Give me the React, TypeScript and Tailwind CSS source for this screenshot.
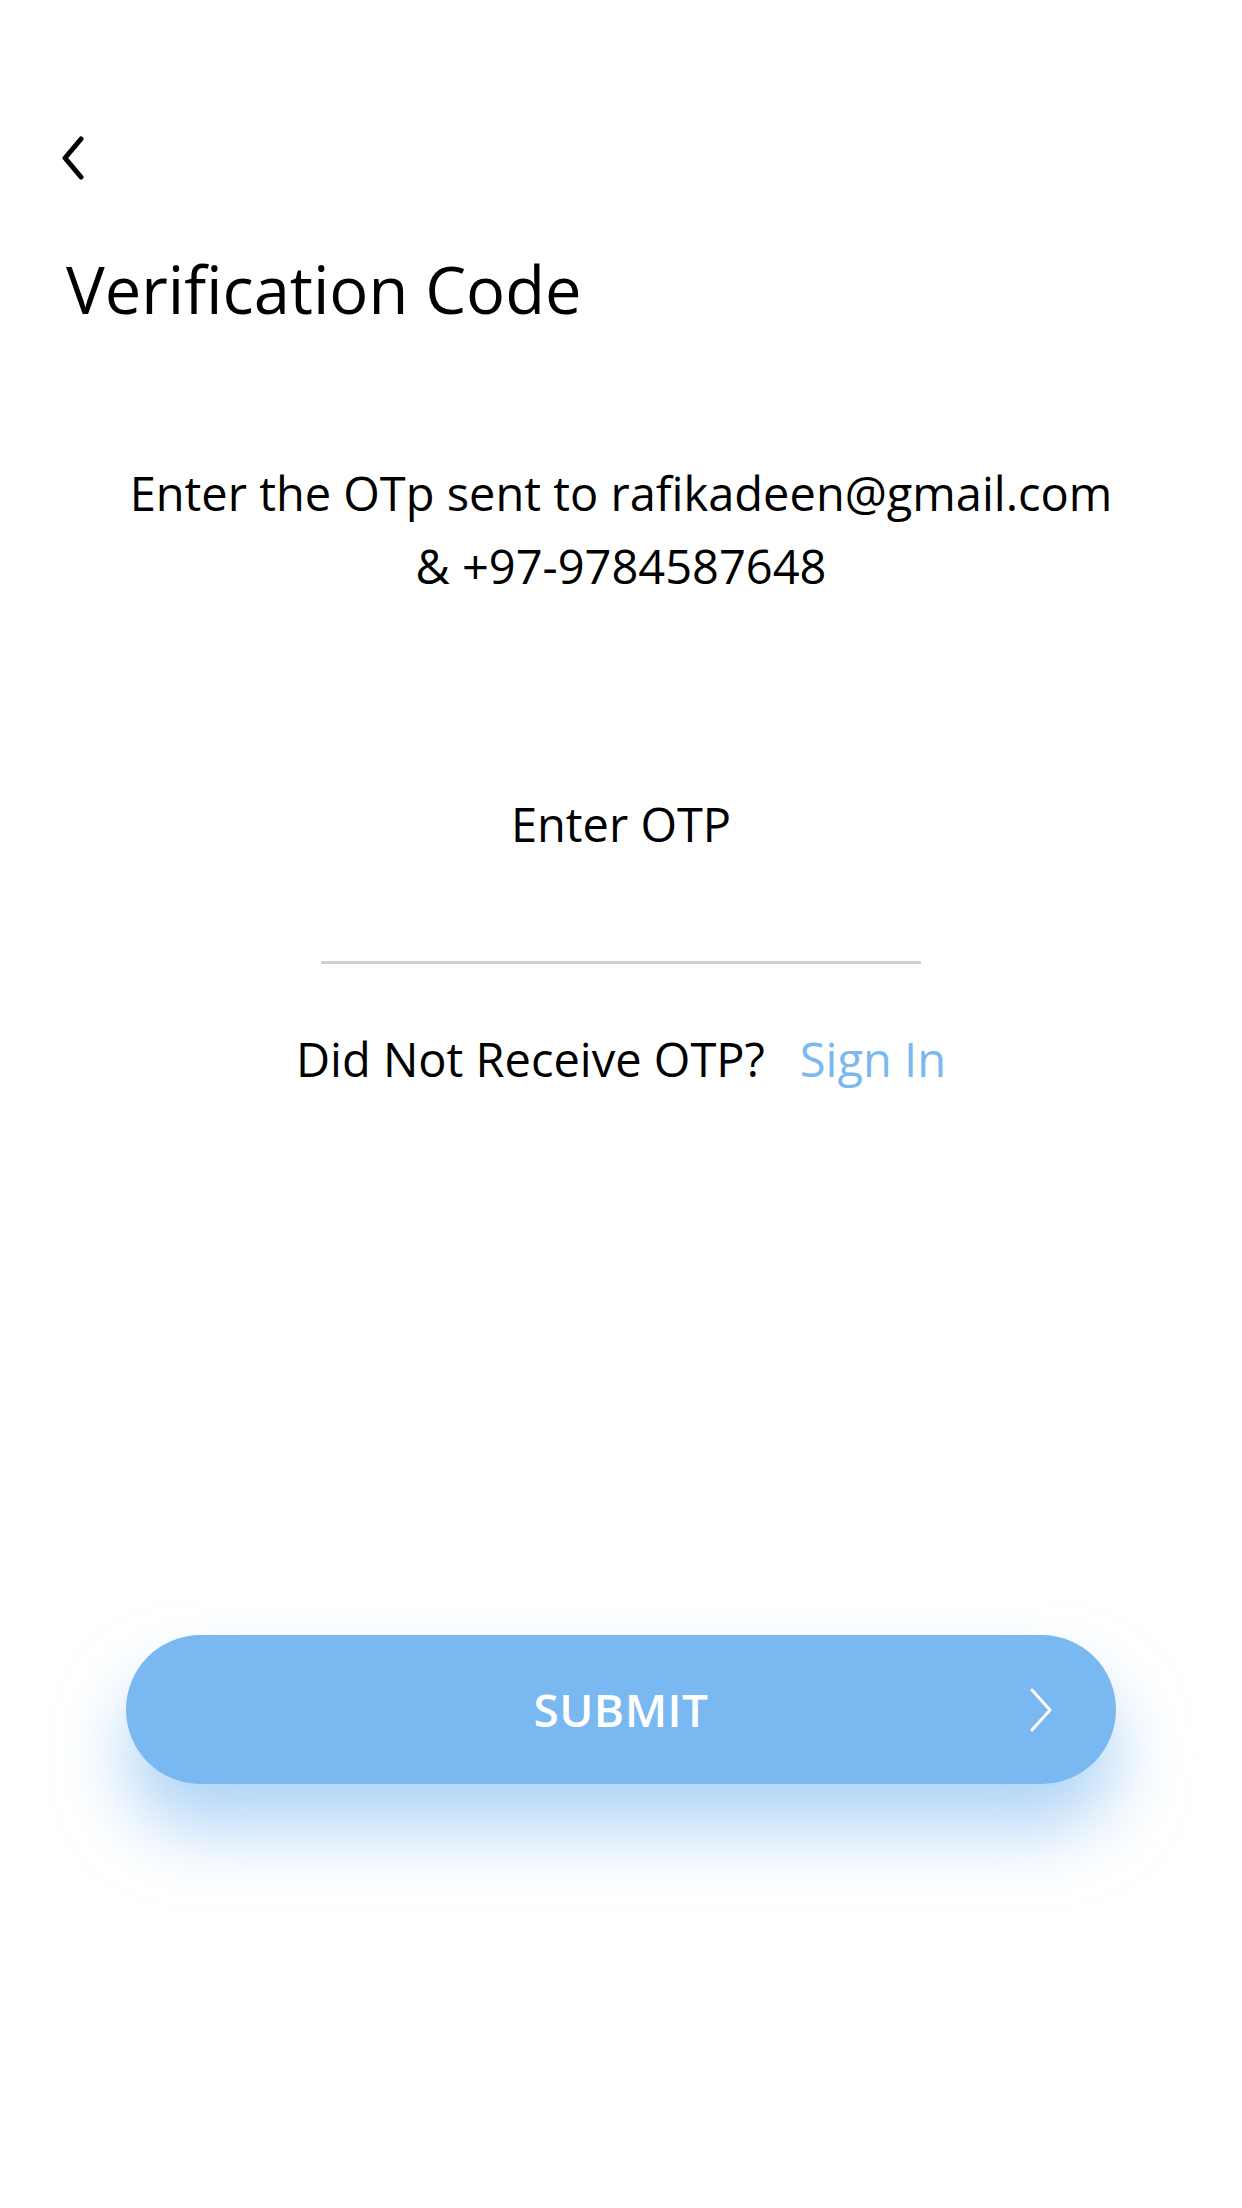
import React from 'react'

const BackIcon = () => (
  <svg width="26" height="44" viewBox="0 0 26 44" fill="none">
    <path d="M21 3 L5 22 L21 41" stroke="#000" strokeWidth="5" strokeLinecap="round" strokeLinejoin="round" />
  </svg>
)

const NextIcon = () => (
  <svg width="26" height="44" viewBox="0 0 26 44" fill="none">
    <path d="M4 2 L22 22 L4 42" stroke="#fff" strokeWidth="3" strokeLinecap="round" strokeLinejoin="round" />
  </svg>
)

export default function App() {
  return (
    <div className="min-h-[2208px] w-full bg-white font-['Open_Sans',sans-serif] text-black">
      <div className="pl-[60px] pt-[136px]">
        <button className="block">
          <BackIcon />
        </button>
      </div>

      <h1 className="ml-[66px] mt-[77px] text-[65px] leading-[65px] font-normal">
        Verification Code
      </h1>

      <p className="mt-[135px] text-center text-[47px] leading-[73px]">
        Enter the OTp sent to rafikadeen@gmail.com
        <br />
        &amp; +97-9784587648
      </p>

      <div className="mt-[185px] flex flex-col items-center">
        <label className="text-[47px] leading-[73px]">Enter OTP</label>
        <input
          className="mt-[43px] h-[60px] w-[600px] border-b-[3px] border-[#d0d0d0] bg-transparent text-center text-[44px] outline-none"
          type="text"
        />
        <div className="mt-[59px] flex items-center text-[47px] leading-[73px]">
          <span>Did Not Receive OTP?</span>
          <a className="ml-[35px] text-[#7ab8ef]" href="#">
            Sign In
          </a>
        </div>
      </div>

      <div className="mt-[539px] flex justify-center">
        <button className="relative flex h-[149px] w-[990px] items-center justify-center rounded-full bg-[#79b8f1] shadow-[0_45px_70px_rgba(121,184,241,0.6)]">
          <span className="text-[46px] font-semibold tracking-[0.5px] text-white">SUBMIT</span>
          <span className="absolute right-[62px] top-1/2 -translate-y-1/2">
            <NextIcon />
          </span>
        </button>
      </div>
    </div>
  )
}
